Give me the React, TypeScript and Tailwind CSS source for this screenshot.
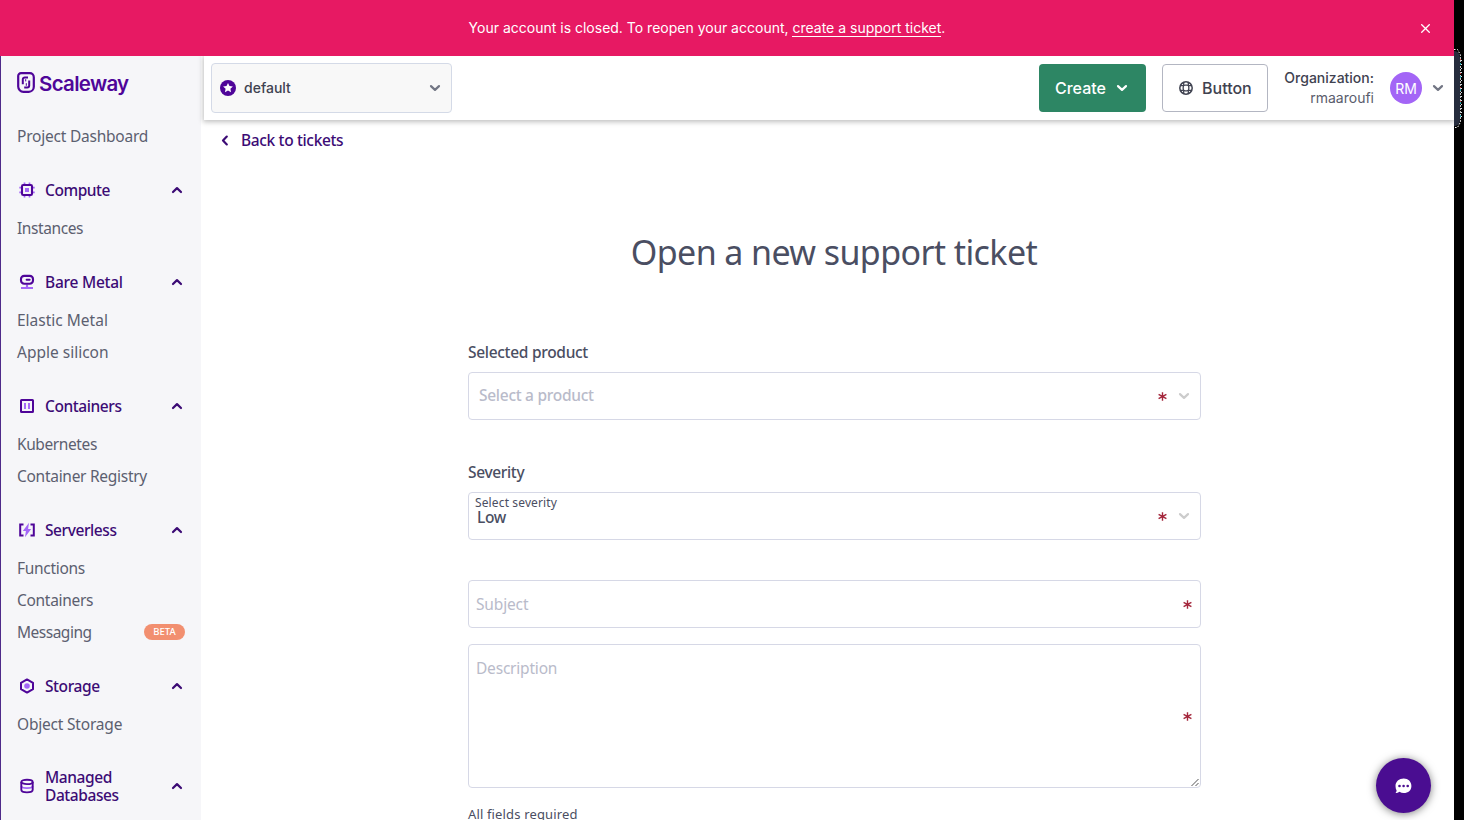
import React from "react";

const ASAP = "font-['Noto_Sans',sans-serif]";
const INTER = "font-[Inter,sans-serif]";

function Chevron({ className = "", dir = "down" }: { className?: string; dir?: "down" | "up" | "left" }) {
  const d = dir === "down" ? "M2 2.1 6 5.900 10 2.1" : dir === "up" ? "M2 6 6 2.1 10 6" : "M5.800 1.600 2 5.500 5.800 9.400";
  return (
    <svg
      className={className}
      width={dir === "left" ? 8 : 12}
      height={dir === "left" ? 11 : 8}
      viewBox={dir === "left" ? "0 0 8 11" : "0 0 12 8"}
      fill="none"
      stroke="currentColor"
      strokeWidth="2.2"
      strokeLinejoin="round"
      strokeLinecap="round"
    >
      <path d={d} />
    </svg>
  );
}

const P = "#4f0599";
const L = "#a466f7";

const icons: Record<string, React.ReactNode> = {
  compute: (
    <>
      <path d="M5.500 0.500v15M10.500 0.500v15M0.300 5.600h15.400M0.300 10.400h15.400" stroke={L} strokeWidth="1.700" />
      <rect x="3" y="3" width="10" height="10" rx="1.200" fill="#f6f6f9" stroke={P} strokeWidth="2.1" />
      <rect x="6" y="6" width="4" height="4" fill={L} />
    </>
  ),
  metal: (
    <>
      <path d="M8 10.500v3M2 14h12" stroke={L} strokeWidth="2.2" />
      <rect x="2" y="1.900" width="12" height="7.800" rx="3.200" stroke={P} strokeWidth="2.1" />
      <path d="M7.600 5.700h3" stroke={P} strokeWidth="2" strokeLinecap="round" />
    </>
  ),
  containers: (
    <>
      <rect x="2" y="2" width="12" height="12" rx="0.500" stroke={P} strokeWidth="2" />
      <path d="M6 5v6M10 5v6" stroke={L} strokeWidth="1.900" />
    </>
  ),
  serverless: (
    <>
      <path d="M4.500 2.500H1.200v11h3.300M11.500 2.500h3.300v11h-3.300" stroke={P} strokeWidth="2" />
      <path d="M10 0.800 3.800 8.900h3.100L6 15.200 12.200 7.100H9.100z" fill={L} />
    </>
  ),
  storage: (
    <>
      <path d="M8 1.400 14 4.800v6.400L8 14.600 2 11.200V4.800z" stroke={P} strokeWidth="2" strokeLinejoin="round" />
      <circle cx="8" cy="8" r="2.800" fill={L} />
    </>
  ),
  database: (
    <>
      <path d="M2.400 8c0 2.800 11.200 2.800 11.200 0" stroke={L} strokeWidth="1.800" />
      <ellipse cx="8" cy="3.900" rx="5.700" ry="2.200" stroke={P} strokeWidth="1.900" />
      <path d="M2.300 4v7.800c0 3.400 11.400 3.400 11.400 0V4" stroke={P} strokeWidth="1.900" />
    </>
  ),
};

type Item = { label: string; ls: string; badge?: string };
type Section = { title: string; icon: string; ls: string; items: Item[] };

const sections: Section[] = [
  { title: "Compute", icon: "compute", ls: "tracking-[-0.45px]", items: [{ label: "Instances", ls: "tracking-[-0.4px]" }] },
  {
    title: "Bare Metal",
    icon: "metal",
    ls: "tracking-[-0.25px]",
    items: [{ label: "Elastic Metal", ls: "tracking-normal" }, { label: "Apple silicon", ls: "tracking-normal" }],
  },
  {
    title: "Containers",
    icon: "containers",
    ls: "tracking-[-0.42px]",
    items: [{ label: "Kubernetes", ls: "tracking-[-0.4px]" }, { label: "Container Registry", ls: "tracking-[-0.28px]" }],
  },
  {
    title: "Serverless",
    icon: "serverless",
    ls: "tracking-[-0.42px]",
    items: [
      { label: "Functions", ls: "tracking-[-0.3px]" },
      { label: "Containers", ls: "tracking-[-0.3px]" },
      { label: "Messaging", ls: "tracking-[-0.5px]", badge: "BETA" },
    ],
  },
  { title: "Storage", icon: "storage", ls: "tracking-[-0.42px]", items: [{ label: "Object Storage", ls: "tracking-[-0.2px]" }] },
  { title: "Managed Databases", icon: "database", ls: "tracking-[-0.42px]", items: [] },
];

function Sidebar() {
  return (
    <aside className={`${ASAP} w-[201px] shrink-0 overflow-hidden border-l border-[#4f2a8a] bg-[#f6f6f9] pl-4 text-[15.5px]`}>
      <div className="flex h-16 items-start gap-1 pt-4">
        <svg width="18" height="21" viewBox="0 0 18 21" fill="none" stroke={P} className="shrink-0">
          <path d="M4 1.200h8.800a4 4 0 0 1 4 4v9.600a5 5 0 0 1-5 5H6.400A5.200 5.200 0 0 1 1.200 14.600V4a2.800 2.800 0 0 1 2.800-2.800z" strokeWidth="2.200" />
          <path d="M11 5.400H7.800a2 2 0 0 0-2 2v4.800M7.200 15.400h3a2 2 0 0 0 2-2V8.400" strokeWidth="2" />
          <path d="M8.700 7.200v2.200M9.300 11.200v2.600" strokeWidth="1" />
        </svg>
        <span className={`${INTER} pt-px text-[20.5px] leading-[22px] font-semibold tracking-[-0.7px] text-[#4f0599]`}>Scaleway</span>
      </div>
      <div className="flex h-8 items-center pt-0.5 tracking-[-0.22px] text-[#5c5f70]">Project Dashboard</div>
      {sections.map((s) => (
        <div key={s.title} className="mt-4">
          <div className={`flex items-center ${s.items.length ? "h-11" : "h-[60px]"}`}>
            <svg width="16" height="16" viewBox="0 0 16 16" fill="none" className="ml-0.5 shrink-0">
              {icons[s.icon]}
            </svg>
            <span className={`${s.ls} ml-2.5 w-[126px] shrink-0 pr-8 leading-[18px] font-medium text-[#3c0b75]`}>{s.title}</span>
            <Chevron dir="up" className="text-[#3c0b75]" />
          </div>
          {s.items.map((i) => (
            <div key={i.label} className="flex h-8 items-center justify-between pr-4 whitespace-nowrap text-[#5c5f70]">
              <span className={`${i.ls} pt-0.5`}>{i.label}</span>
              {i.badge && (
                <span className="flex h-4 w-[41px] items-center justify-center rounded-full bg-[#f28f70] text-[9.500px] font-medium text-white">{i.badge}</span>
              )}
            </div>
          ))}
        </div>
      ))}
    </aside>
  );
}

function Asterisk({ className = "" }: { className?: string }) {
  return (
    <svg width="9" height="9" viewBox="0 0 9 9" stroke="#a4263b" strokeWidth="1.400" className={className}>
      <path d="M4.500 0.200v8.600M0.600 2.300l7.800 4.400M8.400 2.300L0.600 6.700" />
    </svg>
  );
}

function Header() {
  return (
    <header className={`${INTER} relative z-10 ml-[3px] flex h-16 items-start bg-white pl-[7px] text-[#3f4250] shadow-[0_1px_5px_1px_rgba(0,0,0,0.25)] [clip-path:inset(0_0_-10px_-10px)]`}>
      <div className="mt-[7px] flex h-[50px] w-[241px] items-center rounded-[4px] border border-[#d4dae7] bg-[#f8f8f8] pl-2">
        <svg width="16" height="16" viewBox="0 0 16 16">
          <circle cx="8" cy="8" r="8" fill={P} />
          <path d="m8 3 1.500 3.100 3.400.4-2.500 2.350.65 3.400L8 10.600 4.950 12.250l.65-3.400L3.100 6.500l3.400-.4z" fill="#fff" />
        </svg>
        <span className="ml-2 flex-1 pb-px text-[14px] font-medium">default</span>
        <Chevron className="mr-[10px] text-[#727684]" />
      </div>
      <div className="flex-1" />
      <div className="mt-2 flex h-12 w-[107px] items-center rounded-[4px] bg-[#2d8664] pl-4 text-[16px] font-medium text-white">
        <span className="w-[61px]">Create</span>
        <Chevron />
      </div>
      <div className="mt-2 ml-4 flex h-12 w-[106px] items-center rounded-[4px] border border-[#b3b6c2] pl-4 text-[16px] font-medium">
        <svg width="14" height="14" viewBox="0 0 14 14" fill="none" stroke="#3f4250">
          <circle cx="7" cy="7" r="6.200" strokeWidth="1.500" />
          <rect x="4.200" y="4.200" width="5.600" height="5.600" rx="1.800" strokeWidth="1.300" />
          <path d="M4.700 1v3.500M9.300 1v3.500M4.700 9.500V13M9.300 9.500V13M1 4.700h3.500M1 9.300h3.500M9.500 4.700H13M9.500 9.300H13" strokeWidth="1.300" />
        </svg>
        <span className="ml-[9px]">Button</span>
      </div>
      <div className="mt-3 ml-4 w-[90px] text-right text-[14px] leading-5 whitespace-nowrap">
        <div className="font-medium">Organization:</div>
        <div className="text-[#5a5d6c]">rmaaroufi</div>
      </div>
      <div className="mt-4 ml-4 flex h-8 w-8 items-center justify-center rounded-full bg-[#a365f6] text-[14px] text-white">RM</div>
      <Chevron className="mt-7 mr-[10px] ml-[10px] text-[#727684]" />
    </header>
  );
}

const box = "flex rounded-[4px] border border-[#d6d8e6]";

function TicketForm() {
  return (
    <main className={`${ASAP} flex-1 overflow-hidden text-[#4a4e62]`}>
      <div className="flex h-10 items-center pl-5 text-[15.500px] font-medium text-[#3c0b75]">
        <Chevron dir="left" />
        <span className="ml-3 pt-0.5 tracking-[-0.35px]">Back to tickets</span>
      </div>
      <h1 className="mt-[66px] h-[52px] pl-[13px] text-center text-[34px] leading-[52px] tracking-[-0.6px]">Open a new support ticket</h1>
      <form className="ml-[267px] w-[733px] pt-[62px] text-[15.500px]">
        <label className="block h-6 leading-6 font-medium tracking-[-0.3px]">Selected product</label>
        <div className={`${box} mt-2 h-12 items-center pr-[10px] pl-[10px]`}>
          <span className="flex-1 font-medium tracking-[-0.28px] text-[#b9bbca]">Select a product</span>
          <Asterisk />
          <Chevron className="ml-[11px] text-[#cccccc]" />
        </div>
        <label className="mt-10 block h-6 leading-6 font-medium tracking-[-0.35px]">Severity</label>
        <div className={`${box} mt-2 h-12 items-center pr-[10px] pl-[6px]`}>
          <div className="flex h-11 flex-1 flex-col">
            <div className="h-4 pt-px text-[12px] leading-4 tracking-[0.13px]">Select severity</div>
            <div className="pl-0.5 leading-[15px] font-medium tracking-[-0.3px]">Low</div>
          </div>
          <Asterisk />
          <Chevron className="ml-[11px] text-[#cccccc]" />
        </div>
        <div className={`${box} mt-10 h-12 items-center justify-between pr-2 pl-[7px] text-[#b9bbca]`}>
          <span className="pt-0.5 tracking-[-0.15px]">Subject</span>
          <Asterisk />
        </div>
        <div className={`${box} relative mt-4 h-36 items-center justify-between pr-2 pl-[7px] text-[#b9bbca]`}>
          <span className="self-start pt-3 tracking-[-0.2px]">Description</span>
          <Asterisk />
          <svg width="9" height="9" viewBox="0 0 9 9" className="absolute right-0 bottom-0" stroke="#555" strokeWidth="1">
            <path d="M0.500 8 7.500 1M4.500 8 7.500 5" />
          </svg>
        </div>
        <p className="mt-4 text-[13px] leading-5 tracking-[0.15px]">All fields required</p>
      </form>
    </main>
  );
}

export default function App() {
  return (
    <div className="flex h-[820px] w-[1464px] overflow-hidden bg-black">
      <div className="relative flex w-[1454px] flex-col bg-white">
        <div className={`${INTER} flex h-14 shrink-0 items-center bg-[#e71963] text-[14px] text-white`}>
          <div className="w-[1414px] pb-0.5 text-center">
            Your account is closed. To reopen your account, <a className="border-b border-white">create a support ticket</a>.
          </div>
          <svg width="9" height="9" viewBox="0 0 9 9" stroke="#fff" strokeWidth="1.300" className="ml-[7px]">
            <path d="M0.300 0.300 8.700 8.700M8.700 0.300 0.300 8.700" />
          </svg>
        </div>
        <div className="flex min-h-0 flex-1">
          <Sidebar />
          <div className="flex min-w-0 flex-1 flex-col">
            <Header />
            <TicketForm />
          </div>
        </div>
        <div className="absolute top-[758px] left-[1376px] flex h-[55px] w-[55px] items-center justify-center rounded-full bg-[#4a0d91] shadow-[0_1px_9px_rgba(0,0,0,0.5)]">
          <svg width="17" height="16" viewBox="0 0 17 16">
            <path d="M8.700 0.500C13.200 0.500 16.400 3.600 16.400 7.900s-3.200 7.100-7.700 7.100c-1.500 0-3-.4-4.200-1.200-1.200.9-2.500 1.300-4 1.300.6-.8 1-1.700 1.100-2.700C.9 11.100.500 9.600.500 7.900.500 3.600 4.200.500 8.700.500z" fill="#fff" />
            <g fill="#4a0d91">
              <circle cx="4.500" cy="8" r="1.300" />
              <circle cx="8.600" cy="8" r="1.300" />
              <circle cx="12.700" cy="8" r="1.300" />
            </g>
          </svg>
        </div>
      </div>
      <svg width="10" height="80" viewBox="0 0 10 80" className="mt-[49px]" fill="none">
        <path d="M0 2C4 2 6 5 6 10V70C6 75 4 77 0 77z" fill="#262c3d" />
        <path d="M0 0.500H3.500L6.500 6V73L3.500 78.500H0" stroke="#fff" strokeDasharray="1.500 1.500" />
        <path d="M7.500 11V70" stroke="#dfe6ee" strokeDasharray="1 3" />
        <path d="M6.500 10V70" stroke="#d03434" strokeDasharray="1 13" />
        <path d="M6.500 14V70" stroke="#20a0a8" strokeDasharray="2 11" />
      </svg>
    </div>
  );
}
